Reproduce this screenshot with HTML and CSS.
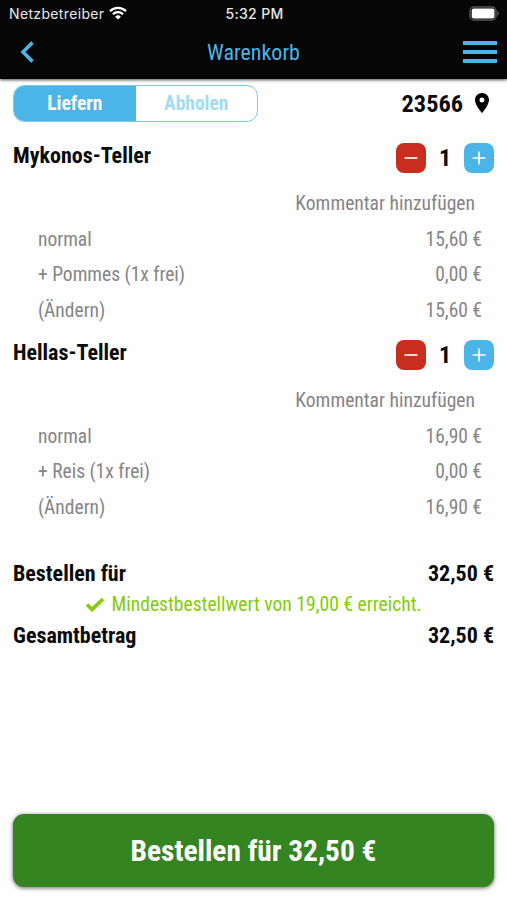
FILE: index.html
```html
<!DOCTYPE html>
<html lang="de">
<head>
    <meta charset="UTF-8">
    <meta name="viewport" content="width=device-width, initial-scale=1.0">
    <title>Warenkorb</title>
    <link rel="stylesheet" href="styles.css">
</head>
<body>
    <header class="header">
        <div class="status-bar">
            <div class="carrier">
                <span>Netzbetreiber</span>
                <svg class="wifi" viewBox="0 0 18 14" width="18" height="14">
                    <path d="M1 5.2a11.5 11.5 0 0 1 16 0M3.9 8.2a7.3 7.3 0 0 1 10.2 0" fill="none" stroke="#fff" stroke-width="2.3"/>
                    <path d="M9 13.6l-2.9-2.9a4.1 4.1 0 0 1 5.8 0z" fill="#fff"/>
                </svg>
            </div>
            <span class="clock">5:32 PM</span>
            <svg class="battery" viewBox="0 0 31 15" width="31" height="15">
                <rect x="1" y="1" width="26" height="13" rx="4" fill="none" stroke="#555" stroke-width="1.5"/>
                <rect x="2.7" y="2.6" width="22.8" height="9.8" rx="2" fill="#fff"/>
                <path d="M28.5 5a3 3 0 0 1 0 5z" fill="#666"/>
            </svg>
        </div>
        <nav class="nav-bar">
            <svg class="back" viewBox="0 0 14 22" width="14" height="22">
                <path d="M12.5 1.500L3 11l9.500 9.500" fill="none" stroke="#4ab5e6" stroke-width="3.600"/>
            </svg>
            <h1 class="title">Warenkorb</h1>
            <div class="menu"><i></i><i></i><i></i></div>
        </nav>
    </header>

    <main class="cart">
        <div class="delivery">
            <div class="switch">
                <span class="option active">Liefern</span>
                <span class="option">Abholen</span>
            </div>
            <div class="location">
                <span>23566</span>
                <svg class="pin" viewBox="0 0 14 20" width="14" height="20">
                    <path d="M7 0C3.100 0 0 3.100 0 7c0 5.200 7 13 7 13s7-7.800 7-13c0-3.900-3.100-7-7-7zm0 9.500a2.500 2.500 0 1 1 0-5 2.500 2.500 0 0 1 0 5z"/>
                </svg>
            </div>
        </div>

        <!-- Artikel -->
        <section class="item">
            <div class="item-head">
                <h2 class="item-name">Mykonos-Teller</h2>
                <div class="counter">
                    <button class="btn minus"><svg viewBox="0 0 14 14" width="14" height="14"><path d="M.5 7h13"/></svg></button>
                    <span class="count">1</span>
                    <button class="btn plus"><svg viewBox="0 0 14 14" width="14" height="14"><path d="M.5 7h13M7 .5v13"/></svg></button>
                </div>
            </div>
            <div class="comment">Kommentar hinzufügen</div>
            <div class="row"><span>normal</span><span class="price">15,60 €</span></div>
            <div class="row"><span>+ Pommes (1x frei)</span><span class="price">0,00 €</span></div>
            <div class="row"><span>(Ändern)</span><span class="price">15,60 €</span></div>
        </section>

        <section class="item">
            <div class="item-head">
                <h2 class="item-name">Hellas-Teller</h2>
                <div class="counter">
                    <button class="btn minus"><svg viewBox="0 0 14 14" width="14" height="14"><path d="M.5 7h13"/></svg></button>
                    <span class="count">1</span>
                    <button class="btn plus"><svg viewBox="0 0 14 14" width="14" height="14"><path d="M.5 7h13M7 .5v13"/></svg></button>
                </div>
            </div>
            <div class="comment">Kommentar hinzufügen</div>
            <div class="row"><span>normal</span><span class="price">16,90 €</span></div>
            <div class="row"><span>+ Reis (1x frei)</span><span class="price">0,00 €</span></div>
            <div class="row"><span>(Ändern)</span><span class="price">16,90 €</span></div>
        </section>

        <!-- Summe -->
        <section class="summary">
            <div class="total"><span>Bestellen für</span><span>32,50 €</span></div>
            <div class="minimum">
                <svg viewBox="0 0 20 15" width="20" height="15">
                    <path d="M2 7.500l5 5L18 2" fill="none" stroke="#84cc0c" stroke-width="3.800"/>
                </svg>
                <span>Mindestbestellwert von 19,00 € erreicht.</span>
            </div>
            <div class="total"><span>Gesamtbetrag</span><span>32,50 €</span></div>
        </section>
    </main>

    <footer class="footer">
        <button class="order">Bestellen für 32,50 €</button>
    </footer>
</body>
</html>
```

FILE: styles.css
```css
* {
    box-sizing: border-box;
}
body {
    margin: 0;
    height: 900px;
    display: flex;
    flex-direction: column;
    background-color: #fefefe;
    color: #0a0a0a;
    font-family: "Roboto Condensed", Roboto, sans-serif;
    font-stretch: 75%;
    overflow: hidden;
}
button {
    border: none;
    padding: 0;
    font: inherit;
    color: #fff;
}
.header {
    height: 79px;
    background-color: #060606;
    box-shadow: 0 1px 3px rgba(0, 0, 0, 0.7);
}
.status-bar {
    height: 27px;
    padding: 0 7px 0 9px;
    display: grid;
    grid-template-columns: 1fr auto 1fr;
    align-items: center;
    color: #e8e8e8;
    font-family: Inter, sans-serif;
    font-stretch: normal;
    font-size: 14px;
    letter-spacing: 0.35px;
}
.carrier {
    display: flex;
    align-items: center;
    gap: 5px;
}
.wifi {
    margin-top: -2px;
}
.clock {
    font-weight: 500;
}
.battery {
    justify-self: end;
    margin-top: -1px;
}
.nav-bar {
    height: 50px;
    padding: 0 10px;
    display: grid;
    grid-template-columns: 1fr auto 1fr;
    align-items: center;
}
.back {
    margin-left: 10px;
}
.title {
    margin: 0;
    color: #4ab5e6;
    font-size: 22px;
    font-weight: 400;
}
.menu {
    justify-self: end;
    width: 34px;
    display: flex;
    flex-direction: column;
    gap: 5px;
}
.menu i {
    height: 4px;
    background-color: #4ab5e6;
}
.cart {
    flex: 1;
    padding: 6px 13px 0;
}
.delivery {
    height: 37px;
    display: flex;
    justify-content: space-between;
}
.switch {
    width: 245px;
    display: flex;
    border: 1px solid #7cc9ec;
    border-radius: 11px;
    overflow: hidden;
}
.option {
    flex: 1;
    display: flex;
    align-items: center;
    justify-content: center;
    color: #a5daf3;
    font-size: 19.5px;
    font-weight: 700;
}
.option.active {
    background-color: #4ab5e6;
    color: #fff;
}
.location {
    display: flex;
    align-items: center;
    gap: 12px;
    padding-right: 5px;
    font-size: 24.3px;
    font-weight: 700;
}
.pin {
    margin-top: -2px;
}
.item {
    height: 197px;
}
.item:first-of-type {
    margin-top: 15px;
}
.item-head {
    height: 49px;
    display: flex;
    justify-content: space-between;
}
.item-name {
    margin: 6px 0 0;
    font-size: 22px;
    line-height: 26px;
    font-weight: 700;
}
.counter {
    height: 30px;
    margin-top: 6px;
    display: flex;
    align-items: center;
}
.btn {
    width: 30px;
    height: 30px;
    display: flex;
    align-items: center;
    justify-content: center;
    border-radius: 8px;
}
.btn path {
    stroke: #fff;
    stroke-width: 1.6;
}
.minus {
    background-color: #c92d20;
}
.plus {
    background-color: #4ab5e6;
}
.count {
    width: 38px;
    text-align: center;
    font-size: 24px;
    font-weight: 700;
}
.comment {
    height: 35.5px;
    padding-right: 19px;
    color: #858585;
    font-size: 19.6px;
    line-height: 35px;
    text-align: right;
}
.row {
    height: 35.5px;
    padding: 0 12px 0 25px;
    display: flex;
    justify-content: space-between;
    color: #858585;
    font-size: 19.5px;
    line-height: 35px;
}
.summary {
    margin-top: 27px;
}
.total {
    height: 31px;
    display: flex;
    justify-content: space-between;
    font-size: 22px;
    line-height: 31px;
    font-weight: 700;
}
.minimum {
    height: 31px;
    display: flex;
    align-items: center;
    justify-content: center;
    gap: 6px;
    color: #84cc0c;
    font-size: 19.6px;
}
.footer {
    padding: 0 13px 13px;
}
.order {
    width: 100%;
    height: 73px;
    background-color: #348421;
    border-radius: 11px;
    box-shadow: 0 1px 4px rgba(0, 0, 0, 0.6);
    font-size: 29.4px;
    font-weight: 700;
}
```
